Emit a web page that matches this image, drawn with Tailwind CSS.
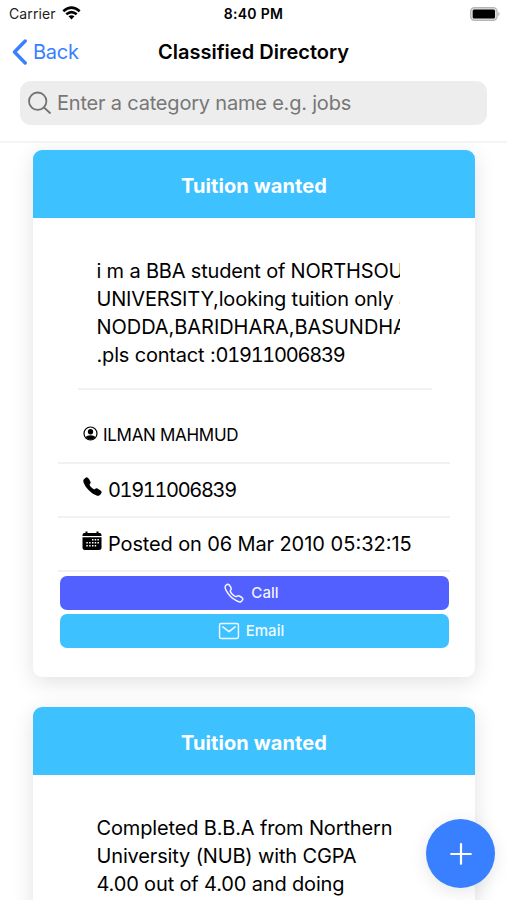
<!DOCTYPE html>
<html lang="en">
<head>
<meta charset="utf-8">
<title>Classified Directory</title>
<script src="https://cdn.jsdelivr.net/npm/@tailwindcss/browser@4"></script>
</head>
<body class="bg-white">
<div class="relative flex h-[900px] w-[507px] flex-col overflow-hidden bg-white font-['Inter','Liberation_Sans',sans-serif] text-black">
  <header class="z-10 h-[143px] shrink-0 border-b-2 border-[#f4f4f4] bg-white">
    <div class="grid h-[27px] grid-cols-[150px_1fr_150px] items-center pl-[9px] pr-[7px]">
      <div class="flex items-center gap-[6px] text-[14px] leading-[27px] text-[#222]">
        <span class="tracking-[0.1px]">Carrier</span>
        <svg class="-mt-[2px] h-[14px] w-[19px]" viewBox="0 0 19 14" fill="none" stroke="#000" stroke-width="2.6"><path d="M1.3 5.2Q9.5-2 17.700 5.200"/><path d="M4.300 8.300Q9.500 3.900 14.700 8.300"/><path d="M6.500 10.300Q9.500 8 12.500 10.300L9.500 13.500Z" fill="#000" stroke="none"/></svg>
      </div>
      <div class="pr-[2px] text-center text-[14px] font-semibold tracking-[0.3px] whitespace-nowrap">8:40 PM</div>
      <svg class="h-[16px] w-[31px] justify-self-end" viewBox="0 0 31 16"><rect x="1.600" y="1.600" width="26.500" height="12.800" rx="4" fill="#ddd" stroke="#b5b5b5" stroke-width="1.200"/><rect x="3.700" y="3.500" width="22.300" height="9" rx="1.500"/><path d="M29.300 5.800q2.400 1.800 0 4.400z" fill="#aaa"/></svg>
    </div>
    <div class="grid h-[50px] grid-cols-[110px_1fr_110px] items-center pl-[12px] pr-[12px]">
      <div class="flex items-center gap-[6px] text-[#3880ff]">
        <svg class="h-[26px] w-[15px]" viewBox="0 0 15 26" fill="none" stroke="currentColor" stroke-width="3.400" stroke-linecap="round" stroke-linejoin="round"><path d="M13.200 2L2.500 13L13.200 24"/></svg>
        <span class="text-[20px] tracking-[-0.25px]">Back</span>
      </div>
      <h1 class="text-center text-[20px] font-semibold tracking-[0.02px] whitespace-nowrap">Classified Directory</h1>
    </div>
    <div class="mx-[20px] mt-[4px] flex h-[44px] items-center rounded-[11px] bg-[#ededed] pl-[7px] text-[#777]">
      <svg class="h-[25px] w-[25px]" viewBox="0 0 25 25" fill="none" stroke="#737373" stroke-width="1.800" stroke-linecap="round"><circle cx="10.700" cy="10.200" r="8.700"/><path d="M17 16.500L23 22"/></svg>
      <span class="ml-[5px] text-[20px] tracking-[-0.2px] whitespace-nowrap">Enter a category name e.g. jobs</span>
    </div>
  </header>

  <main class="flex flex-col gap-[30px] pl-[33px] pr-[32px] pt-[7px]">
    <article class="h-[527px] shrink-0 overflow-hidden rounded-[9px] bg-white shadow-[0_5px_21px_rgba(0,0,0,0.12)]">
      <h2 class="flex h-[68px] items-center justify-center bg-[#3dc2ff] pt-[3px] text-[20px] font-bold tracking-[0.1px] text-white">Tuition wanted</h2>
      <div class="ml-[45px] h-[172px] w-[354px] border-b-2 border-[#f1f1f1] pt-[39px]">
        <div class="ml-[18.500px] w-[303.500px] overflow-hidden text-[20px] leading-[28px] tracking-[-0.18px] whitespace-nowrap">
          <p>i m a BBA student of NORTHSOUTH</p>
          <p>UNIVERSITY,looking tuition only at</p>
          <p class="tracking-[-0.05px]">NODDA,BARIDHARA,BASUNDHARA</p>
          <p>.pls contact :<span class="tabular-nums tracking-[-1.25px]">01911006839</span></p>
        </div>
      </div>
      <div class="ml-[25px] flex w-[392px] flex-col whitespace-nowrap">
        <div class="flex h-[74px] items-center border-b-2 border-[#f1f1f1] pt-[19px] pl-[25px]">
          <svg class="-mt-[5px] h-[15px] w-[15px]" viewBox="0 0 30 30"><circle cx="15" cy="15" r="13" fill="none" stroke="#000" stroke-width="2.400"/><circle cx="15" cy="11.500" r="5.300"/><path d="M5 22Q8 18.500 15 18.500T25 22Q21 27.500 15 27.500T5 22Z"/></svg>
          <span class="ml-[5px] text-[17px] tracking-[-0.3px]">ILMAN MAHMUD</span>
        </div>
        <div class="flex h-[54px] items-center border-b-2 border-[#f1f1f1] pl-[24px]">
          <svg class="-mt-[8px] h-[21px] w-[21px]" viewBox="0 0 512 512"><path d="M391 480c-19.520 0-46.940-7.060-88-30-49.930-28-88.550-53.850-138.210-103.380C116.910 298.770 93.610 267.790 61 208.450c-36.840-67-30.560-102.120-23.540-117.130C45.820 73.380 58.160 62.650 74.110 52a176.300 176.300 0 0128.640-15.200c1-.43 1.930-.84 2.760-1.210 4.950-2.230 12.450-5.600 21.950-2 6.340 2.380 12 7.250 20.860 16 18.170 17.920 43 57.830 52.160 77.430 6.150 13.210 10.220 21.930 10.230 31.710 0 11.450-5.760 20.280-12.750 29.810-1.310 1.790-2.610 3.500-3.870 5.160-7.610 10-9.280 12.890-8.180 18.050 2.230 10.370 18.860 41.240 46.190 68.510s57.310 42.850 67.720 45.070c5.380 1.150 8.330-.59 18.650-8.470 1.480-1.130 3-2.300 4.590-3.470 10.660-7.930 19.080-13.540 30.260-13.540h.06c9.730 0 18.060 4.220 31.860 11.180 18 9.080 59.110 33.590 77.140 51.780 8.770 8.840 13.660 14.480 16.050 20.810 3.600 9.530.21 17-2 22-.37.83-.78 1.740-1.210 2.750a176.490 176.490 0 01-15.290 28.580c-10.630 15.900-21.400 28.210-39.380 36.580A67.420 67.420 0 01391 480z"/></svg>
          <span class="-mt-px ml-[5px] text-[20px] tabular-nums tracking-[-1.350px]">01911006839</span>
        </div>
        <div class="flex h-[54px] items-center border-b-2 border-[#f1f1f1] pl-[24px]">
          <svg class="-mt-[6px] h-[20px] w-[20px]" viewBox="0 0 19 20"><path d="M0 5V4Q0 2 2 2H3V.5H5V2H14V.5H16V2H17Q19 2 19 4V5Z"/><path d="M0 6.200H19V16.500Q19 19 16.500 19H2.500Q0 19 0 16.500Z"/><g fill="#fff"><path d="M9.500 8h1.500v1.500H9.500zM12.200 8h1.500v1.500h-1.500zM14.900 8h1.500v1.500h-1.500zM3.800 11h1.500v1.500H3.800zM6.600 11h1.500v1.500H6.600zM9.500 11h1.500v1.500H9.500zM12.200 11h1.500v1.500h-1.500zM14.900 11h1.500v1.500h-1.500zM3.800 14h1.500v1.500H3.800zM6.600 14h1.500v1.500H6.600zM9.500 14h1.500v1.500H9.500zM12.200 14h1.500v1.500h-1.500z"/></g></svg>
          <span class="ml-[6px] text-[20px] tracking-[-0.13px]">Posted on 06 Mar <span class="tracking-[0px]">2010 05:32:15</span></span>
        </div>
      </div>
      <div class="ml-[26.500px] mt-[4px] flex w-[389px] flex-col gap-[4px] text-[15px] font-medium tracking-[0.05px] text-white/95">
        <div class="flex h-[34px] items-center justify-center gap-[6px] rounded-[7px] bg-[#5260ff] pr-[6px]">
          <svg class="h-[22px] w-[22px]" viewBox="0 0 512 512" fill="none" stroke="currentColor" stroke-width="34"><path d="M451 374c-15.880-16-54.340-39.350-73-48.760-24.300-12.240-26.300-13.240-45.400.95-12.740 9.470-21.210 17.930-36.120 14.750s-47.310-21.110-75.680-49.390-47.340-61.620-50.530-76.480 5.410-23.230 14.790-36c13.220-18 12.220-21 .92-45.300-8.810-18.900-32.840-57-48.900-72.800C119.900 44 119.900 47 108.830 51.600A160.150 160.150 0 0083 65.370C67 76 58.120 84.830 51.910 98.100s-9 44.380 23.070 102.640 54.570 88.050 101.140 134.490S258.500 406.640 310.850 436c64.760 36.270 89.600 29.200 102.910 23s22.180-15 32.830-31a159.090 159.090 0 0013.800-25.800C465 391.170 468 391.170 451 374z"/></svg>
          <span>Call</span>
        </div>
        <div class="flex h-[34px] items-center justify-center gap-[6px] rounded-[7px] bg-[#3dc2ff] pr-[6px]">
          <svg class="h-[22px] w-[22px]" viewBox="0 0 512 512" fill="none" stroke="currentColor" stroke-width="34" stroke-linecap="round" stroke-linejoin="round"><rect x="36" y="80" width="440" height="352" rx="40"/><path d="M112 160l144 112 144-112"/></svg>
          <span>Email</span>
        </div>
      </div>
    </article>

    <article class="h-[527px] shrink-0 overflow-hidden rounded-[9px] bg-white shadow-[0_5px_21px_rgba(0,0,0,0.12)]">
      <h2 class="flex h-[68px] items-center justify-center bg-[#3dc2ff] pt-[3px] text-[20px] font-bold tracking-[0.1px] text-white">Tuition wanted</h2>
      <div class="ml-[63.500px] mt-[39px] w-[303.500px] overflow-hidden text-[20px] leading-[28px] tracking-[-0.15px] whitespace-nowrap">
        <p>Completed B.B.A from Northern</p>
        <p>University (NUB) with CGPA</p>
        <p>4.00 out of 4.00 and doing</p>
      </div>
    </article>
  </main>

  <div class="absolute top-[819px] left-[426px] flex h-[69px] w-[69px] items-center justify-center rounded-full bg-[#3880ff] shadow-[0_4px_18px_rgba(0,0,0,0.1)]">
    <svg class="h-[22px] w-[22px]" viewBox="0 0 22 22" stroke="#fff" stroke-width="2.200" stroke-linecap="round"><path d="M11 1.200V20.800M1.200 11H20.800"/></svg>
  </div>
</div>
</body>
</html>
